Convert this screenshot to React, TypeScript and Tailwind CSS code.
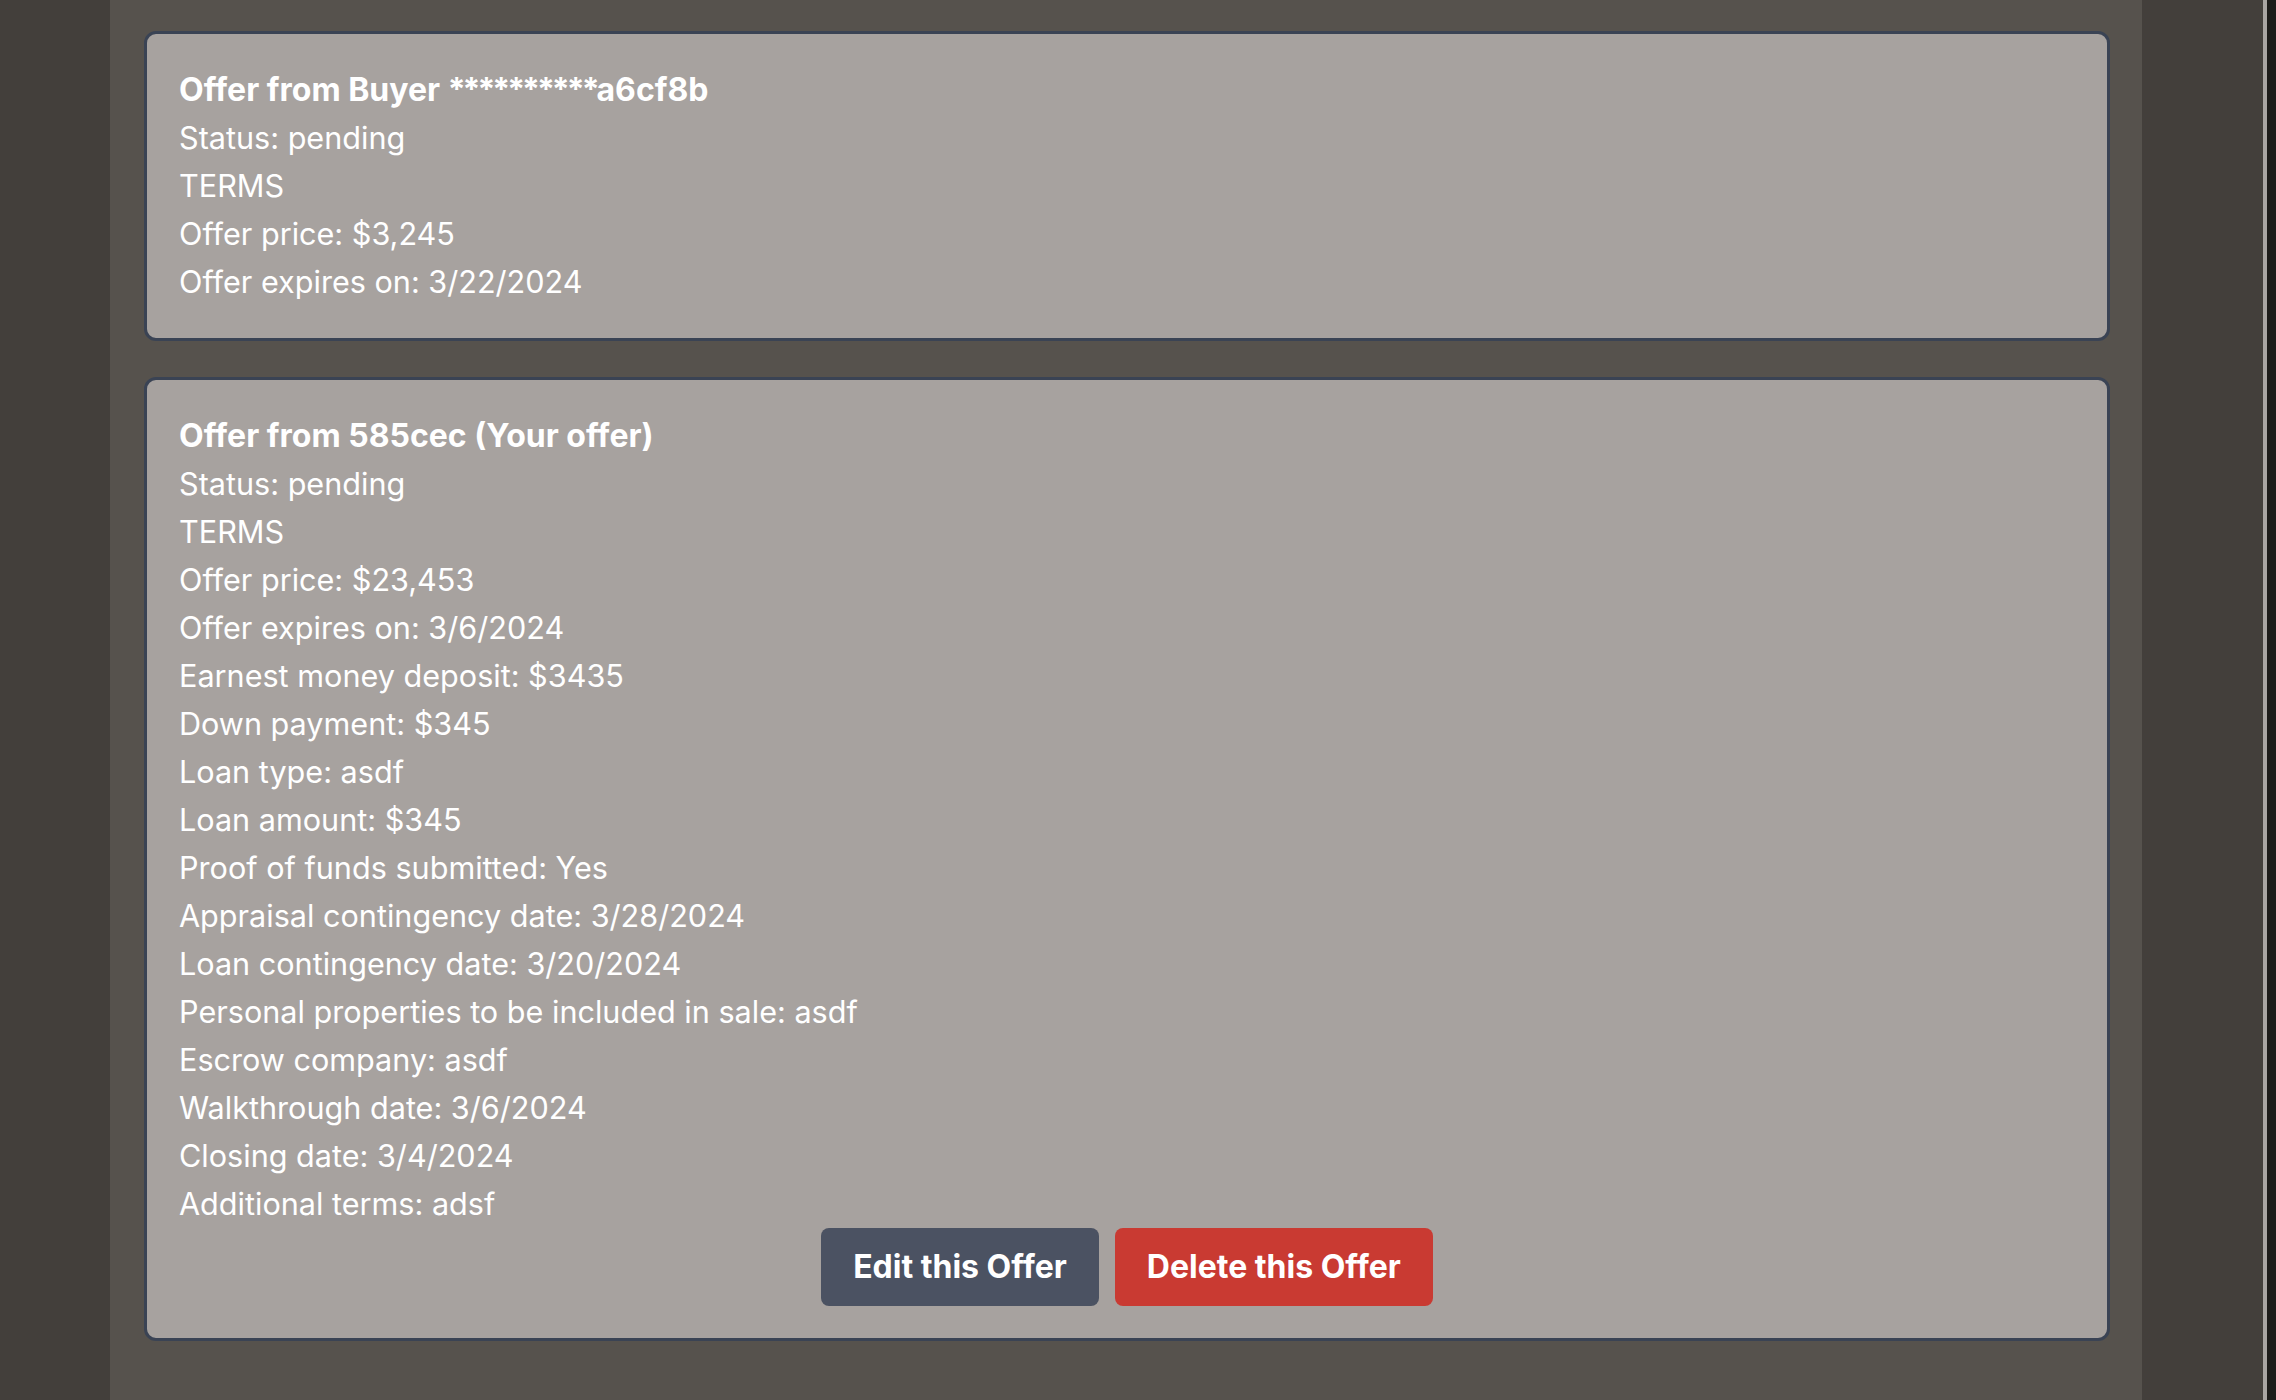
const firstOffer = [
  "Status: pending",
  "TERMS",
  "Offer price: $3,245",
  "Offer expires on: 3/22/2024",
];

const secondOffer = [
  "Status: pending",
  "TERMS",
  "Offer price: $23,453",
  "Offer expires on: 3/6/2024",
  "Earnest money deposit: $3435",
  "Down payment: $345",
  "Loan type: asdf",
  "Loan amount: $345",
  "Proof of funds submitted: Yes",
  "Appraisal contingency date: 3/28/2024",
  "Loan contingency date: 3/20/2024",
  "Personal properties to be included in sale: asdf",
  "Escrow company: asdf",
  "Walkthrough date: 3/6/2024",
  "Closing date: 3/4/2024",
  "Additional terms: adsf",
];

function OfferCard({ title, lines, mine }: { title: React.ReactNode; lines: string[]; mine?: boolean }) {
  return (
    <div className="rounded-[12px] border-[3px] border-[#3a4354] bg-[#a7a29f] p-[32px] text-white">
      <p className="text-[32px] font-bold">{title}</p>
      {lines.map((line) => (
        <p key={line}>{line}</p>
      ))}
      {mine && (
        <div className="flex justify-center gap-[16px]">
          <button className="h-[78px] rounded-[8px] bg-[#4b5262] px-[32px] text-[32px] font-bold text-white">
            Edit this Offer
          </button>
          <button className="h-[78px] rounded-[8px] bg-[#c93a32] px-[32px] text-[32px] font-bold text-white">
            Delete this Offer
          </button>
        </div>
      )}
    </div>
  );
}

export default function App() {
  return (
    <div className="flex min-h-screen bg-[#433f3b] font-['Inter',sans-serif] text-[30.6px] leading-[48px]">
      <div className="w-[110px] shrink-0" />
      <main className="flex w-[2032px] shrink-0 flex-col gap-[36px] bg-[#56524d] pl-[34px] pr-[32px] pt-[31px] pb-[40px]">
        <OfferCard
          title={
            <>
              Offer from Buyer <span className="tracking-[-3px]">**********</span>a6cf8b
            </>
          }
          lines={firstOffer}
        />
        <OfferCard title="Offer from 585cec (Your offer)" lines={secondOffer} mine />
      </main>
      <div className="flex-1" />
      <div className="flex w-[13px] shrink-0">
        <div className="w-[4px] bg-[#a9a5a2]" />
        <div className="flex-1 bg-[#1c1b19]" />
      </div>
    </div>
  );
}
